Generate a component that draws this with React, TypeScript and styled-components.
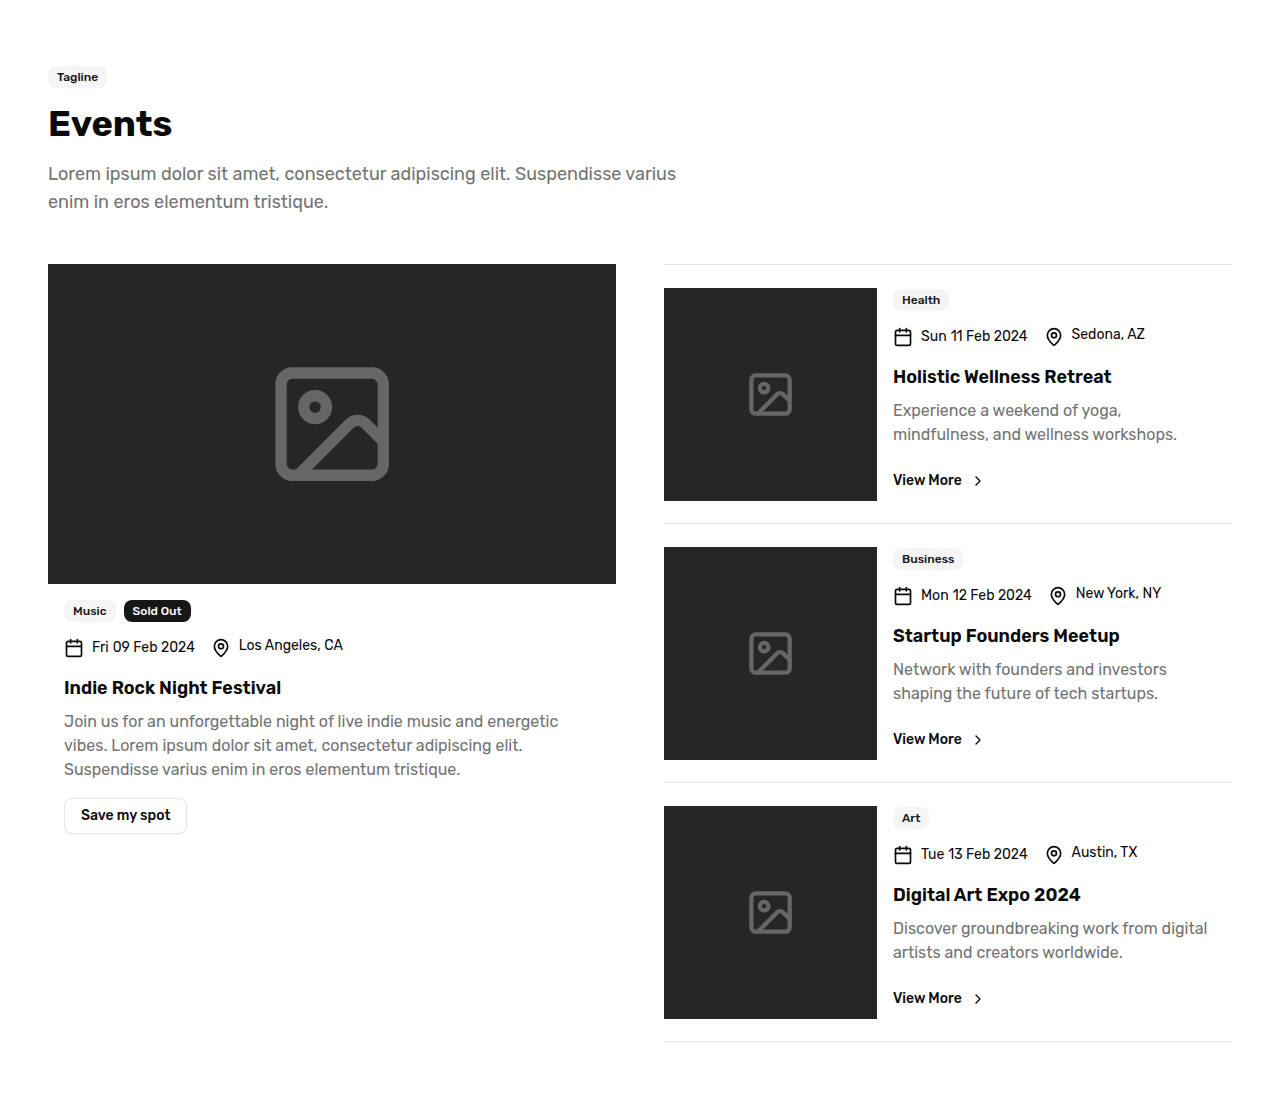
import React from "react";
import styled, { createGlobalStyle, css } from "styled-components";
import { Calendar, ChevronRight, Image as ImageIcon, MapPin } from "lucide-react";

const GlobalStyle = createGlobalStyle`
  *, *::before, *::after { box-sizing: border-box; }
  body {
    margin: 0;
    background: #ffffff;
    color: #0a0a0a;
    font-family: Rubik, Inter, "Liberation Sans", sans-serif;
    font-size: 16px;
    line-height: 24px;
  }
  h1, h2, h3, p, ul { margin: 0; padding: 0; }
`;

const Page = styled.main`
  padding: 66px 48px 64px;
`;

const Header = styled.header`
  display: flex;
  flex-direction: column;
  align-items: flex-start;
  gap: 16px;
  max-width: 656px;
  margin-bottom: 48px;
`;

const Heading = styled.h1`
  font-size: 36px;
  line-height: 40px;
  font-weight: 700;
`;

const Lead = styled.p`
  font-size: 18px;
  line-height: 28px;
  color: #737373;
`;

const Badge = styled.span<{ $solid?: boolean }>`
  display: inline-flex;
  align-items: center;
  padding: 3px 9px;
  border-radius: 8px;
  font-size: 12px;
  line-height: 16px;
  font-weight: 500;
  white-space: nowrap;
  background: ${(p) => (p.$solid ? "#171717" : "#f5f5f5")};
  color: ${(p) => (p.$solid ? "#fafafa" : "#171717")};
`;

const Columns = styled.div`
  display: grid;
  grid-template-columns: repeat(2, minmax(0, 1fr));
  gap: 48px;
  align-items: start;

  @media (max-width: 900px) {
    grid-template-columns: minmax(0, 1fr);
  }
`;

const Picture = styled.div<{ $square?: boolean }>`
  display: flex;
  align-items: center;
  justify-content: center;
  background: #262626;
  color: #666666;
  ${(p) =>
    p.$square
      ? css`
          flex: 0 0 37.5%;
          aspect-ratio: 1;
        `
      : css`
          height: 320px;
        `}

  svg {
    width: 24%;
    height: auto;
  }
`;

const FeaturedBody = styled.div`
  display: flex;
  flex-direction: column;
  align-items: flex-start;
  padding: 16px;
`;

const Badges = styled.div`
  display: flex;
  gap: 8px;
`;

const Meta = styled.div`
  display: flex;
  gap: 16px;
  margin: 16px 0;
  font-size: 14px;
  line-height: 20px;
  white-space: nowrap;
`;

const MetaItem = styled.div`
  display: flex;
  align-items: flex-start;
  gap: 8px;
`;

const DateText = styled.span`
  display: flex;
  gap: 4px;
`;

const Place = styled.span`
  line-height: 16px;
`;

const Title = styled.h2`
  margin-bottom: 8px;
  font-size: 18px;
  line-height: 28px;
  font-weight: 600;
`;

const Description = styled.p`
  margin-bottom: 16px;
  color: #737373;
`;

const buttonBase = css`
  display: inline-flex;
  align-items: center;
  gap: 8px;
  height: 36px;
  font-family: inherit;
  font-size: 14px;
  line-height: 20px;
  font-weight: 500;
  color: #0a0a0a;
  cursor: pointer;
`;

const OutlineButton = styled.button`
  ${buttonBase}
  padding: 0 16px;
  border: 1px solid #e5e5e5;
  border-radius: 8px;
  background: #ffffff;
  box-shadow: 0 1px 2px rgba(0, 0, 0, 0.05);
`;

const LinkButton = styled.button`
  ${buttonBase}
  padding: 0;
  border: 0;
  background: transparent;
`;

const EventList = styled.ul`
  list-style: none;
  border-top: 1px solid #e5e5e5;
`;

const EventRow = styled.li`
  display: flex;
  align-items: center;
  gap: 16px;
  padding: 23px 0 22px;
  border-bottom: 1px solid #e5e5e5;
`;

const EventBody = styled.div`
  display: flex;
  flex: 1;
  flex-direction: column;
  align-items: flex-start;
  min-width: 0;
  padding: 0 16px 2px 0;
`;

interface EventData {
  tag: string;
  weekday: string;
  date: string;
  place: string;
  title: string;
  text: string;
}

const featured: EventData = {
  tag: "Music",
  weekday: "Fri",
  date: "09 Feb 2024",
  place: "Los Angeles, CA",
  title: "Indie Rock Night Festival",
  text: "Join us for an unforgettable night of live indie music and energetic vibes. Lorem ipsum dolor sit amet, consectetur adipiscing elit. Suspendisse varius enim in eros elementum tristique.",
};

const events: EventData[] = [
  {
    tag: "Health",
    weekday: "Sun",
    date: "11 Feb 2024",
    place: "Sedona, AZ",
    title: "Holistic Wellness Retreat",
    text: "Experience a weekend of yoga, mindfulness, and wellness workshops.",
  },
  {
    tag: "Business",
    weekday: "Mon",
    date: "12 Feb 2024",
    place: "New York, NY",
    title: "Startup Founders Meetup",
    text: "Network with founders and investors shaping the future of tech startups.",
  },
  {
    tag: "Art",
    weekday: "Tue",
    date: "13 Feb 2024",
    place: "Austin, TX",
    title: "Digital Art Expo 2024",
    text: "Discover groundbreaking work from digital artists and creators worldwide.",
  },
];

function EventMeta({ weekday, date, place }: Pick<EventData, "weekday" | "date" | "place">) {
  return (
    <Meta>
      <MetaItem>
        <Calendar size={20} />
        <DateText>
          <span>{weekday}</span>
          <span>{date}</span>
        </DateText>
      </MetaItem>
      <MetaItem>
        <MapPin size={20} />
        <Place>{place}</Place>
      </MetaItem>
    </Meta>
  );
}

export default function App() {
  return (
    <>
      <GlobalStyle />
      <Page>
        <Header>
          <Badge>Tagline</Badge>
          <Heading>Events</Heading>
          <Lead>
            Lorem ipsum dolor sit amet, consectetur adipiscing elit. Suspendisse varius enim in eros
            elementum tristique.
          </Lead>
        </Header>
        <Columns>
          <article>
            <Picture>
              <ImageIcon />
            </Picture>
            <FeaturedBody>
              <Badges>
                <Badge>{featured.tag}</Badge>
                <Badge $solid>Sold Out</Badge>
              </Badges>
              <EventMeta weekday={featured.weekday} date={featured.date} place={featured.place} />
              <Title>{featured.title}</Title>
              <Description>{featured.text}</Description>
              <OutlineButton type="button">Save my spot</OutlineButton>
            </FeaturedBody>
          </article>
          <EventList>
            {events.map((event) => (
              <EventRow key={event.title}>
                <Picture $square>
                  <ImageIcon />
                </Picture>
                <EventBody>
                  <Badge>{event.tag}</Badge>
                  <EventMeta weekday={event.weekday} date={event.date} place={event.place} />
                  <Title>{event.title}</Title>
                  <Description>{event.text}</Description>
                  <LinkButton type="button">
                    View More
                    <ChevronRight size={16} />
                  </LinkButton>
                </EventBody>
              </EventRow>
            ))}
          </EventList>
        </Columns>
      </Page>
    </>
  );
}
